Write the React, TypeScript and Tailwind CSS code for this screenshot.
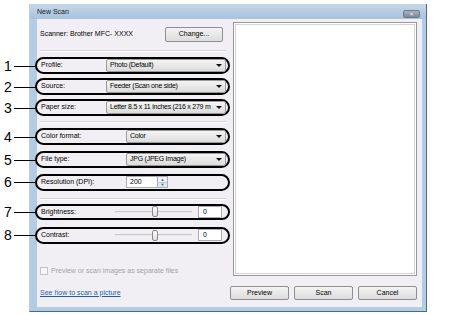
import React from 'react';

const font = "font-['Liberation_Sans',Arial,sans-serif]";

const Arrow = () => (
  <svg width="6" height="3" viewBox="0 0 6 3" className="shrink-0 ml-[2px]">
    <path d="M0 0 L6 0 L3 3 Z" fill="#111" />
  </svg>
);

const Callout = ({ n }: { n: number }) => (
  <>
    <span className="absolute left-[-33px] top-1/2 -translate-y-1/2 text-[14px] leading-none text-black">
      {n}
    </span>
    <span className="absolute left-[-23px] top-1/2 w-[22px] h-[1px] bg-black" />
  </>
);

const Select = ({ value }: { value: string }) => (
  <div className="flex-1 min-w-0 h-[13px] mr-[2px] flex items-center justify-between pl-[3px] pr-[3px] border border-[#9a9a9a] rounded-[2px] bg-gradient-to-b from-[#f4f4f4] to-[#dcdcdc] text-[7px] tracking-[-0.25px] text-black font-medium whitespace-nowrap">
    <span>{value}</span>
    <Arrow />
  </div>
);

const Row = ({ n, label, labelW, children, className = '' }: { n: number; label: string; labelW: string; children: React.ReactNode; className?: string }) => (
  <div className={`relative h-[17px] -ml-[2px] w-[195px] border-2 border-black rounded-full flex items-center ${className}`}>
    <Callout n={n} />
    <span className={`${labelW} pl-[4px] text-[7px] text-black shrink-0`}>{label}</span>
    {children}
  </div>
);

const Slider = () => (
  <div className="relative w-[77px] h-[11px] flex items-center">
    <div className="w-full h-[2px] bg-[#c8c8c8] border-b border-[#e8e8e8]" />
    <div className="absolute left-[37px] top-0 w-[6px] h-[11px] rounded-[2px] border border-[#8a8a8a] bg-gradient-to-b from-white to-[#dedede]" />
  </div>
);

const Separator = ({ className = '' }: { className?: string }) => (
  <div className={`ml-[3px] w-[186px] h-[2px] border-t border-[#d6d6d6] border-b border-b-white ${className}`} />
);

const Button = ({ label }: { label: string }) => (
  <div className="w-[59px] h-[14px] flex items-center justify-center border border-[#8e8f8f] rounded-[2px] bg-gradient-to-b from-[#f3f3f3] to-[#dcdcdc] text-[7px] text-black">
    {label}
  </div>
);

export default function App() {
  return (
    <div className={`w-[450px] h-[315px] bg-white pt-[4px] pl-[29px] ${font}`}>
      <div className="w-[398px] h-[308px] flex flex-col border-r border-b border-[#4d6a7e] border-l border-l-[#c9c9c9]">
        {/* Title bar */}
        <div className="h-[15px] flex items-start bg-gradient-to-b from-[#c5d7ea] to-[#a7c2dc] pl-[7px] pr-[6px]">
          <span className="mt-[4px] text-[7px] leading-none text-[#1a1a1a]">New Scan</span>
          <div className="ml-auto mt-[6px] w-[17px] h-[8px] rounded-[2px] border border-[#6f7d89] bg-gradient-to-b from-[#a9b3bc] to-[#7c8994] flex items-center justify-center text-white text-[6px] leading-none">
            ×
          </div>
        </div>

        {/* Body with frame */}
        <div className="flex-1 flex flex-col bg-[#f1eff3] border-l-[7px] border-r-[4px] border-b-[4px] border-[#b3cce5]">
          <div className="flex pt-[3px] h-[257px]">
            {/* Left column */}
            <div className="w-[196px] flex flex-col">
              <div className="mt-[5px] h-[15px] flex items-center pl-[3px]">
                <span className="text-[7px] text-black">Scanner: Brother MFC- XXXX</span>
                <div className="ml-auto mr-[10px] w-[58px] h-[15px] flex items-center justify-center border border-[#8e8f8f] rounded-[2px] bg-gradient-to-b from-[#f3f3f3] to-[#dcdcdc] text-[7px] text-black">
                  Change...
                </div>
              </div>

              <Separator className="mt-[8px]" />

              <Row n={1} label="Profile:" labelW="w-[69px]" className="mt-[5px]">
                <Select value="Photo (Default)" />
              </Row>
              <Row n={2} label="Source:" labelW="w-[69px]" className="mt-[4px]">
                <Select value="Feeder (Scan one side)" />
              </Row>
              <Row n={3} label="Paper size:" labelW="w-[69px]" className="mt-[4px]">
                <Select value="Letter 8.5 x 11 inches (216 x 279 m" />
              </Row>

              <Separator className="mt-[5px]" />

              <Row n={4} label="Color format:" labelW="w-[89px]" className="mt-[5px]">
                <Select value="Color" />
              </Row>
              <Row n={5} label="File type:" labelW="w-[89px]" className="mt-[6px]">
                <Select value="JPG (JPEG Image)" />
              </Row>
              <Row n={6} label="Resolution (DPI):" labelW="w-[89px]" className="mt-[6px]">
                <div className="w-[32px] h-[12px] bg-white border border-[#abadb3] flex items-center pl-[3px] text-[7px] text-black">
                  200
                </div>
                <div className="w-[10px] h-[12px] flex flex-col border border-[#abadb3] border-l-0">
                  <div className="flex-1 bg-[#eaf2fa] flex items-center justify-center text-[4px] text-[#555] leading-none">▲</div>
                  <div className="flex-1 bg-[#dde8f3] border-t border-[#c0c8d0] flex items-center justify-center text-[4px] text-[#555] leading-none">▼</div>
                </div>
              </Row>

              <Separator className="mt-[7px]" />

              <Row n={7} label="Brightness:" labelW="w-[78px]" className="mt-[4px]">
                <Slider />
                <div className="ml-[6px] w-[24px] h-[12px] bg-white border border-[#abadb3] flex items-center pl-[4px] text-[7px] text-black">
                  0
                </div>
              </Row>
              <Row n={8} label="Contrast:" labelW="w-[78px]" className="mt-[7px]">
                <Slider />
                <div className="ml-[6px] w-[24px] h-[12px] bg-white border border-[#abadb3] flex items-center pl-[4px] text-[7px] text-black">
                  0
                </div>
              </Row>

              <div className="mt-[22px] ml-[3px] flex items-center gap-[3px]">
                <div className="w-[8px] h-[8px] border border-[#c4c4c4] bg-[#f6f6f6]" />
                <span className="text-[7px] text-[#a3a3a3]">Preview or scan images as separate files</span>
              </div>
            </div>

            {/* Preview */}
            <div className="w-[184px] h-[254px] border border-[#9a9a9a] bg-white p-[1px]">
              <div className="w-full h-full border border-[#d4d4d4]" />
            </div>
          </div>

          {/* Bottom row */}
          <div className="flex items-center mt-[10px]">
            <span className="pl-[3px] text-[7px] text-[#1a5fb4] underline">See how to scan a picture</span>
            <div className="ml-auto mr-[5px] flex gap-[5px]">
              <Button label="Preview" />
              <Button label="Scan" />
              <Button label="Cancel" />
            </div>
          </div>
        </div>
      </div>
    </div>
  );
}
